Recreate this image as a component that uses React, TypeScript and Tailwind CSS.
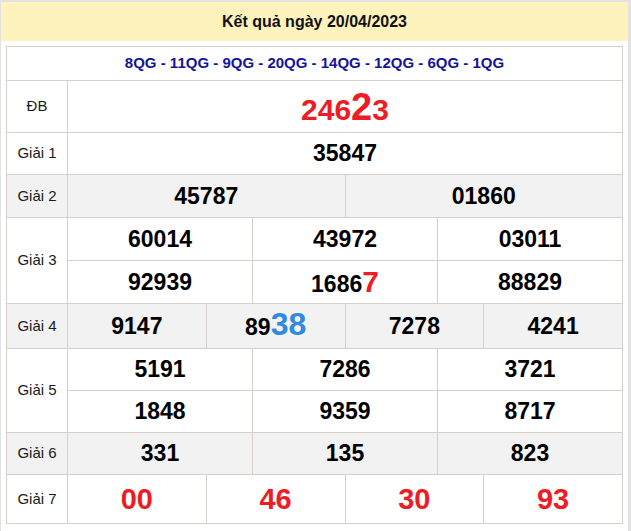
import React from "react";

type Cell = { span: number; content: React.ReactNode };
type Row = { label: string; gray?: boolean; h: string; lines: Cell[][] };

const red = "text-[#ee1c25]";

function num(v: string) {
  return <span className="text-[23px] font-bold text-black">{v}</span>;
}

function redNum(v: string) {
  return <span className={`text-[29px] font-bold ${red}`}>{v}</span>;
}

const rows: Row[] = [
  {
    label: "ĐB",
    h: "h-[52px]",
    lines: [
      [
        {
          span: 12,
          content: (
            <span className={`font-bold ${red} text-[30px]`}>
              246<span className="text-[38px]">2</span>3
            </span>
          ),
        },
      ],
    ],
  },
  { label: "Giải 1", h: "h-[42px]", lines: [[{ span: 12, content: num("35847") }]] },
  {
    label: "Giải 2",
    gray: true,
    h: "h-[43px]",
    lines: [
      [
        { span: 6, content: num("45787") },
        { span: 6, content: num("01860") },
      ],
    ],
  },
  {
    label: "Giải 3",
    h: "h-[43px]",
    lines: [
      [
        { span: 4, content: num("60014") },
        { span: 4, content: num("43972") },
        { span: 4, content: num("03011") },
      ],
      [
        { span: 4, content: num("92939") },
        {
          span: 4,
          content: (
            <span className="text-[23px] font-bold text-black">
              1686<span className={`text-[30px] ${red}`}>7</span>
            </span>
          ),
        },
        { span: 4, content: num("88829") },
      ],
    ],
  },
  {
    label: "Giải 4",
    gray: true,
    h: "h-[45px]",
    lines: [
      [
        { span: 3, content: num("9147") },
        {
          span: 3,
          content: (
            <span className="text-[23px] font-bold text-black relative -top-[2px]">
              89<span className="text-[32px] text-[#2f8ae0]">38</span>
            </span>
          ),
        },
        { span: 3, content: num("7278") },
        { span: 3, content: num("4241") },
      ],
    ],
  },
  {
    label: "Giải 5",
    h: "h-[42px]",
    lines: [
      [
        { span: 4, content: num("5191") },
        { span: 4, content: num("7286") },
        { span: 4, content: num("3721") },
      ],
      [
        { span: 4, content: num("1848") },
        { span: 4, content: num("9359") },
        { span: 4, content: num("8717") },
      ],
    ],
  },
  {
    label: "Giải 6",
    gray: true,
    h: "h-[42px]",
    lines: [
      [
        { span: 4, content: num("331") },
        { span: 4, content: num("135") },
        { span: 4, content: num("823") },
      ],
    ],
  },
  {
    label: "Giải 7",
    h: "h-[49px]",
    lines: [
      [
        { span: 3, content: redNum("00") },
        { span: 3, content: redNum("46") },
        { span: 3, content: redNum("30") },
        { span: 3, content: redNum("93") },
      ],
    ],
  },
];

const cellBorder = "border border-[#d6cfca]";

export default function App() {
  return (
    <div className="w-[631px] h-[531px] bg-white font-['Liberation_Sans',Arial,sans-serif]">
      <div className="h-full border-t-2 border-l border-r-[3px] border-[#e2e2e2]">
        <div className="h-[39px] bg-[#fef2bd] flex items-center justify-center text-[16px] font-bold text-[#111]">
          Kết quả ngày 20/04/2023
        </div>
        <div className="pl-[5px] pt-[5px] pr-[5px]">
          <table className="w-[617px] table-fixed border-collapse">
            <colgroup>
              <col className="w-[61px]" />
              {Array.from({ length: 12 }).map((_, i) => (
                <col key={i} />
              ))}
            </colgroup>
            <tbody>
              <tr className="h-[34px]">
                <td
                  colSpan={13}
                  className={`${cellBorder} text-center text-[15px] font-bold text-[#14149a]`}
                >
                  8QG - 11QG - 9QG - 20QG - 14QG - 12QG - 6QG - 1QG
                </td>
              </tr>
              {rows.map((r) =>
                r.lines.map((line, li) => (
                  <tr key={r.label + li} className={`${r.h} ${r.gray ? "bg-[#f2f2f2]" : ""}`}>
                    {li === 0 && (
                      <td
                        rowSpan={r.lines.length}
                        className={`${cellBorder} text-center text-[15px] text-[#1a1a1a]`}
                      >
                        {r.label}
                      </td>
                    )}
                    {line.map((c, ci) => (
                      <td
                        key={ci}
                        colSpan={c.span}
                        className={`${cellBorder} text-center leading-none`}
                      >
                        {c.content}
                      </td>
                    ))}
                  </tr>
                ))
              )}
            </tbody>
          </table>
        </div>
      </div>
    </div>
  );
}
